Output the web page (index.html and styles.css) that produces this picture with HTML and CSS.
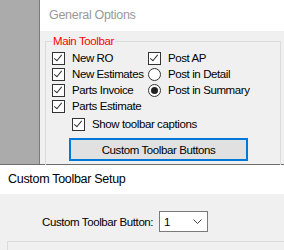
FILE: index.html
```html
<!DOCTYPE html>
<html lang="en">
<head>
  <meta charset="UTF-8">
  <title>Options</title>
  <link rel="stylesheet" href="styles.css">
</head>
<body>
  <div class="desk">
    <div class="opts">
      <div class="opts-title">General Options</div>
      <div class="opts-body">
        <fieldset class="group">
          <legend>Main Toolbar</legend>
          <div class="cols">
            <div class="col col-left">
              <div class="row"><span class="check on"></span>New RO</div>
              <div class="row"><span class="check on"></span>New Estimates</div>
              <div class="row"><span class="check on"></span>Parts Invoice</div>
              <div class="row"><span class="check on"></span>Parts Estimate</div>
            </div>
            <div class="col">
              <div class="row"><span class="check on"></span>Post AP</div>
              <div class="row"><span class="radio"></span>Post in Detail</div>
              <div class="row"><span class="radio on"></span>Post in Summary</div>
            </div>
          </div>
          <div class="row row-captions"><span class="check on"></span>Show toolbar captions</div>
          <button class="btn">Custom Toolbar Buttons</button>
        </fieldset>
      </div>
    </div>
  </div>

  <div class="setup">
    <div class="setup-title">Custom Toolbar Setup</div>
    <div class="setup-body">
      <div class="field">
        <span class="label">Custom Toolbar Button:</span>
        <div class="combo">
          <span>1</span>
          <svg width="9" height="5" viewBox="0 0 9 5"><path d="M0.5 0.5 L4.5 4.5 L8.5 0.5" fill="none" stroke="#444" stroke-width="1"/></svg>
        </div>
      </div>
      <div class="group2"></div>
    </div>
  </div>
</body>
</html>
```

FILE: styles.css
```css
body {
  margin: 0;
  background: #ababab;
  font-family: 'Liberation Sans', Arial, sans-serif;
  font-size: 11.5px;
  letter-spacing: -0.4px;
  color: #000;
  width: 284px;
  height: 250px;
  overflow: hidden;
}

.desk {
  height: 164px;
  padding-left: 39px;
  border-bottom: 1px solid #6e6e6e;
}

.opts {
  height: 164px;
  border-left: 1px solid #7a7a7a;
  background: #f0f0f0;
}

.opts-title {
  height: 31px;
  background: #fff;
  color: #999;
  padding-left: 9px;
  line-height: 31px;
  font-size: 12.5px;
  letter-spacing: -0.3px;
}

.opts-body {
  padding: 4px 0 0 5px;
}

.group {
  margin: 0;
  padding: 2px 0 0 6px;
  border: 1px solid #dcdcdc;
  height: 140px;
  width: 228px;
}

.group legend {
  color: #ff0000;
  padding: 0 1px;
  margin-left: 0;
  line-height: 13px;
}

.cols {
  display: flex;
}

.col-left {
  width: 96px;
}

.row {
  display: flex;
  align-items: center;
  height: 16px;
  white-space: nowrap;
}

.check, .radio {
  width: 13px;
  height: 13px;
  box-sizing: border-box;
  border: 1px solid #333;
  background: #fff;
  margin-right: 7px;
  flex: none;
  position: relative;
}

.radio {
  border-radius: 50%;
}

.check.on::after {
  content: '';
  position: absolute;
  left: 3px;
  top: 0px;
  width: 3px;
  height: 7px;
  border-right: 1px solid #333;
  border-bottom: 1px solid #333;
  transform: rotate(40deg);
}

.radio.on::after {
  content: '';
  position: absolute;
  left: 2px;
  top: 2px;
  width: 7px;
  height: 7px;
  border-radius: 50%;
  background: #222;
}

.row-captions {
  margin: 2px 0 0 20px;
}

.btn {
  display: block;
  margin: 6px 0 0 17px;
  width: 179px;
  height: 23px;
  border: 2px solid #0078d7;
  background: #e1e1e1;
  font-family: inherit;
  font-size: inherit;
  letter-spacing: inherit;
  color: #000;
  padding: 0;
}

.setup {
  height: 85px;
  background: #f0f0f0;
}

.setup-title {
  height: 29px;
  background: #fff;
  padding-left: 8px;
  line-height: 29px;
  font-size: 12.5px;
  letter-spacing: -0.3px;
}

.setup-body {
  padding-top: 17px;
}

.field {
  display: flex;
  align-items: center;
  padding-left: 42px;
}

.label {
  width: 117px;
  white-space: nowrap;
}

.combo {
  width: 49px;
  height: 21px;
  box-sizing: border-box;
  border: 1px solid #7a7a7a;
  background: #fff;
  display: flex;
  align-items: center;
  justify-content: space-between;
  padding: 0 5px 0 4px;
}

.group2 {
  margin: 9px 0 0 7px;
  height: 20px;
  border-top: 1px solid #dcdcdc;
  border-left: 1px solid #dcdcdc;
}
```
